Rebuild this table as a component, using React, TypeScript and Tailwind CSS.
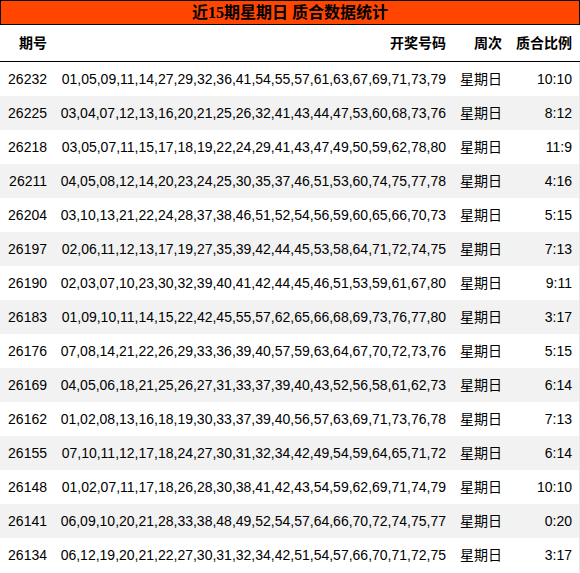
const rows = [
  ["26232", "01,05,09,11,14,27,29,32,36,41,54,55,57,61,63,67,69,71,73,79", "10:10"],
  ["26225", "03,04,07,12,13,16,20,21,25,26,32,41,43,44,47,53,60,68,73,76", "8:12"],
  ["26218", "03,05,07,11,15,17,18,19,22,24,29,41,43,47,49,50,59,62,78,80", "11:9"],
  ["26211", "04,05,08,12,14,20,23,24,25,30,35,37,46,51,53,60,74,75,77,78", "4:16"],
  ["26204", "03,10,13,21,22,24,28,37,38,46,51,52,54,56,59,60,65,66,70,73", "5:15"],
  ["26197", "02,06,11,12,13,17,19,27,35,39,42,44,45,53,58,64,71,72,74,75", "7:13"],
  ["26190", "02,03,07,10,23,30,32,39,40,41,42,44,45,46,51,53,59,61,67,80", "9:11"],
  ["26183", "01,09,10,11,14,15,22,42,45,55,57,62,65,66,68,69,73,76,77,80", "3:17"],
  ["26176", "07,08,14,21,22,26,29,33,36,39,40,57,59,63,64,67,70,72,73,76", "5:15"],
  ["26169", "04,05,06,18,21,25,26,27,31,33,37,39,40,43,52,56,58,61,62,73", "6:14"],
  ["26162", "01,02,08,13,16,18,19,30,33,37,39,40,56,57,63,69,71,73,76,78", "7:13"],
  ["26155", "07,10,11,12,17,18,24,27,30,31,32,34,42,49,54,59,64,65,71,72", "6:14"],
  ["26148", "01,02,07,11,17,18,26,28,30,38,41,42,43,54,59,62,69,71,74,79", "10:10"],
  ["26141", "06,09,10,20,21,28,33,38,48,49,52,54,57,64,66,70,72,74,75,77", "0:20"],
  ["26134", "06,12,19,20,21,22,27,30,31,32,34,42,51,54,57,66,70,71,72,75", "3:17"],
];

// all cells right aligned, fixed column widths
const cols = "grid grid-cols-[55px_399px_56px_70px] whitespace-nowrap";

export default function App() {
  return (
    <div className="w-[580px] bg-white text-black font-['Liberation_Sans','Noto_Sans_CJK_SC',sans-serif]">
      <div className="h-[25px] border border-black bg-[#ff4500] flex items-center justify-center font-['Liberation_Serif','Noto_Sans_CJK_SC',serif] font-bold text-[16px] leading-none">
        近15期星期日 质合数据统计
      </div>
      <div className={`${cols} h-[37px] border-b border-black items-center text-[14px] font-bold`}>
        <div className="text-right pl-1 pr-2">期号</div>
        <div className="text-right pl-1 pr-2">开奖号码</div>
        <div className="text-right pr-2">周次</div>
        <div className="text-right pr-2">质合比例</div>
      </div>
      {rows.map((r, i) => (
        <div
          key={r[0]}
          className={`${cols} h-[34px] items-center text-[14px] border-r border-[#e5e5e5] ${i % 2 === 1 ? "bg-[#f2f2f2]" : "bg-white"}`}
        >
          <div className="text-right pl-1 pr-2">{r[0]}</div>
          <div className="text-right pl-1 pr-2">{r[1]}</div>
          <div className="text-right pr-2">星期日</div>
          <div className="text-right pr-2">{r[2]}</div>
        </div>
      ))}
    </div>
  );
}
